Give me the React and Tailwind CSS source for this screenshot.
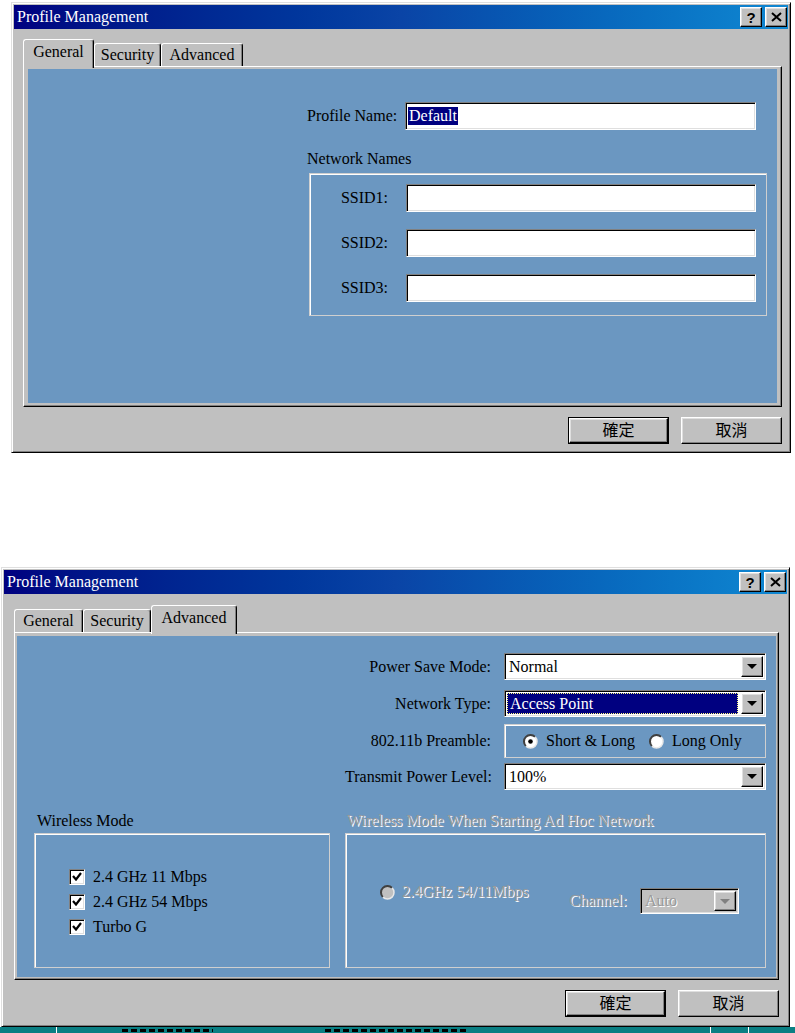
import React from 'react';

const RAISED = "border border-t-white border-l-white border-r-black border-b-black shadow-[inset_-1px_-1px_0_#808080,inset_1px_1px_0_#dfdfdf] bg-[#c0c0c0]";
const SUNKEN = "border border-t-[#808080] border-l-[#808080] border-r-white border-b-white shadow-[inset_1px_1px_0_#000000,inset_-1px_-1px_0_#dfdfdf]";
const ETCHED = "border border-[#cfcfcf] shadow-[inset_1px_1px_0_#ffffff]";
const DISABLED = "text-[#9a9a9a] [text-shadow:1px_1px_0_#ffffff]";

function TitleBar() {
  return (
    <div className="h-[24px] flex items-center justify-between bg-linear-to-r from-[#000080] via-[#0a44a6] to-[#1088d2] pl-[3px] pr-[1px]">
      <span className="text-white text-[16px] leading-none">Profile Management</span>
      <div className="flex gap-[3px]">
        <div className={`w-[22px] h-[20px] ${RAISED} flex items-center justify-center font-['Liberation_Sans',sans-serif] font-bold text-[15px] leading-none`}>?</div>
        <div className={`w-[22px] h-[20px] ${RAISED} flex items-center justify-center`}>
          <svg width="11" height="10" viewBox="0 0 11 10">
            <path d="M1 1 L10 9 M10 1 L1 9" stroke="#000" strokeWidth="2" />
          </svg>
        </div>
      </div>
    </div>
  );
}

function Window({ className, children }) {
  return (
    <div className={`flex flex-col bg-[#c0c0c0] border border-t-[#dfdfdf] border-l-[#dfdfdf] border-r-black border-b-black shadow-[inset_1px_1px_0_#ffffff,inset_-1px_-1px_0_#808080] p-[2px] ${className}`}>
      <TitleBar />
      {children}
    </div>
  );
}

function Tab({ label, active, w }) {
  return (
    <div
      className={`${w} flex items-center justify-center bg-[#c0c0c0] border-l border-t border-r border-l-white border-t-white border-r-black shadow-[inset_-1px_0_0_#808080] rounded-t-[3px] ${
        active ? 'h-[29px] -mb-[2px] relative z-10 pb-[4px]' : 'h-[23px]'
      }`}
    >
      {label}
    </div>
  );
}

function Field({ className, children }) {
  return (
    <div className={`bg-white ${SUNKEN} flex items-center p-[2px] ${className}`}>{children}</div>
  );
}

function DropBtn({ disabled }) {
  return (
    <div className={`w-[22px] h-full ${RAISED} flex items-center justify-center`}>
      <svg width="10" height="5" viewBox="0 0 10 5">
        <path d="M0 0 H10 L5 5 Z" fill={disabled ? '#808080' : '#000000'} />
      </svg>
    </div>
  );
}

function Select({ value, selected, disabled, className }) {
  return (
    <div className={`${disabled ? 'bg-[#c0c0c0]' : 'bg-white'} ${SUNKEN} flex items-stretch p-[2px] ${className}`}>
      <div className="flex-1 flex items-center pr-[3px]">
        {selected ? (
          <span className="flex-1 h-full flex items-center pl-[2px] bg-[#000080] text-white border border-dotted border-[#ffff80]">
            {value}
          </span>
        ) : (
          <span className={`pl-[2px] ${disabled ? DISABLED : ''}`}>{value}</span>
        )}
      </div>
      <DropBtn disabled={disabled} />
    </div>
  );
}

function Radio({ checked, disabled }) {
  return (
    <svg width="15" height="15" viewBox="0 0 15 15" className="shrink-0">
      <circle cx="7.5" cy="7.5" r="6.5" fill={disabled ? '#c0c0c0' : '#ffffff'} />
      <path d="M2.9 12.1 A6.5 6.5 0 0 1 12.1 2.9" stroke="#404040" strokeWidth="2" fill="none" />
      <path d="M12.1 2.9 A6.5 6.5 0 0 1 2.9 12.1" stroke="#e8e8e8" strokeWidth="1.5" fill="none" />
      {checked && <circle cx="7.5" cy="7.5" r="2.3" fill="#000000" />}
    </svg>
  );
}

function Check({ label }) {
  return (
    <div className="flex items-center h-[17px] gap-[8px]">
      <div className={`w-[16px] h-[16px] bg-white ${SUNKEN} flex items-center justify-center`}>
        <svg width="10" height="9" viewBox="0 0 10 9">
          <path d="M1 4 L4 7.5 L9 1" stroke="#000" strokeWidth="2.2" fill="none" />
        </svg>
      </div>
      <span>{label}</span>
    </div>
  );
}

function Buttons() {
  return (
    <div className="flex justify-end gap-[12px] mt-[10px]">
      <div className="border border-black">
        <div className={`w-[99px] h-[25px] ${RAISED} flex items-center justify-center`}>確定</div>
      </div>
      <div className={`w-[101px] h-[27px] ${RAISED} flex items-center justify-center`}>取消</div>
    </div>
  );
}

function SsidRow({ label }) {
  return (
    <div className="flex items-center">
      <span className="w-[78px] text-right">{label}</span>
      <Field className="ml-[18px] w-[350px] h-[28px]" />
    </div>
  );
}

function GeneralDialog() {
  return (
    <Window className="w-[780px] h-[451px]">
      <div className="pl-[9px] pr-[6px] pt-[10px] flex flex-col">
        <div className="flex items-end h-[27px]">
          <Tab label="General" active w="w-[71px]" />
          <Tab label="Security" w="w-[67px]" />
          <Tab label="Advanced" w="w-[82px]" />
        </div>
        <div className="h-[341px] flex flex-col border border-t-white border-l-white border-r-black border-b-black shadow-[inset_-1px_-1px_0_#808080] pl-[4px] pt-[2px] pr-[4px] pb-[3px]">
          <div className="flex-1 bg-[#6b97c1] pl-[279px] pt-[33px]">
            <div className="w-[460px] flex flex-col">
              <div className="flex items-center">
                <span className="w-[98px] whitespace-nowrap">Profile Name:</span>
                <Field className="w-[351px] h-[28px]">
                  <span className="bg-[#000080] text-white px-[1px] leading-[18px]">Default</span>
                </Field>
              </div>
              <div className="mt-[20px] leading-[18px]">Network Names</div>
              <div className={`mt-[5px] ml-[2px] w-[458px] h-[143px] ${ETCHED} pt-[10px] flex flex-col gap-[17px]`}>
                <SsidRow label="SSID1:" />
                <SsidRow label="SSID2:" />
                <SsidRow label="SSID3:" />
              </div>
            </div>
          </div>
        </div>
        <Buttons />
      </div>
    </Window>
  );
}

function Row({ label, children, className }) {
  return (
    <div className={`flex items-center ${className}`}>
      <span className="w-[146px] text-right whitespace-nowrap">{label}</span>
      <div className="ml-[13px] w-[262px]">{children}</div>
    </div>
  );
}

function AdvancedDialog() {
  return (
    <Window className="w-[789px] h-[460px]">
      <div className="pl-[10px] pr-[8px] pt-[11px] flex flex-col">
        <div className="flex items-end h-[27px]">
          <Tab label="General" w="w-[69px]" />
          <Tab label="Security" w="w-[68px]" />
          <Tab label="Advanced" active w="w-[86px]" />
        </div>
        <div className="h-[348px] flex flex-col border border-t-white border-l-white border-r-black border-b-black shadow-[inset_-1px_-1px_0_#808080] pl-[2px] pt-[3px] pr-[2px] pb-[2px]">
          <div className="flex-1 bg-[#6b97c1] flex flex-col">
            <div className="pl-[328px] pt-[17px] flex flex-col">
              <Row label="Power Save Mode:">
                <Select value="Normal" className="h-[27px]" />
              </Row>
              <Row label="Network Type:" className="mt-[10px]">
                <Select value="Access Point" selected className="h-[27px]" />
              </Row>
              <Row label="802.11b Preamble:" className="mt-[7px]">
                <div className={`h-[34px] ${ETCHED} flex items-center pl-[18px]`}>
                  <Radio checked />
                  <span className="ml-[8px]">Short &amp; Long</span>
                  <span className="ml-[14px]"><Radio /></span>
                  <span className="ml-[8px]">Long Only</span>
                </div>
              </Row>
              <Row label="Transmit Power Level:" className="mt-[5px]">
                <Select value="100%" className="h-[27px]" />
              </Row>
            </div>
            <div className="flex pl-[17px] gap-[15px] mt-[21px]">
              <div className="w-[296px] flex flex-col">
                <div className="h-[22px] pl-[3px] leading-[20px]">Wireless Mode</div>
                <div className={`h-[135px] ${ETCHED} pl-[34px] pt-[34px] flex flex-col gap-[8px]`}>
                  <Check label="2.4 GHz 11 Mbps" />
                  <Check label="2.4 GHz 54 Mbps" />
                  <Check label="Turbo G" />
                </div>
              </div>
              <div className="w-[421px] flex flex-col">
                <div className={`h-[22px] pl-[2px] leading-[20px] ${DISABLED}`}>Wireless Mode When Starting Ad Hoc Network</div>
                <div className={`h-[135px] ${ETCHED} flex items-start`}>
                  <div className="flex items-center ml-[34px] mt-[48px]">
                    <Radio disabled />
                    <span className={`ml-[7px] ${DISABLED}`}>2.4GHz 54/11Mbps</span>
                  </div>
                  <div className="flex items-center ml-auto mr-[26px] mt-[54px]">
                    <span className={DISABLED}>Channel:</span>
                    <Select value="Auto" disabled className="ml-[13px] w-[99px] h-[26px]" />
                  </div>
                </div>
              </div>
            </div>
          </div>
        </div>
        <Buttons />
      </div>
    </Window>
  );
}

export default function App() {
  return (
    <div className="w-[795px] h-[1033px] bg-white overflow-hidden font-['Liberation_Serif','Noto_Sans_CJK_TC',serif] text-[16px] leading-tight text-black">
      <div className="pt-[2px] pl-[11px]">
        <GeneralDialog />
      </div>
      <div className="mt-[114px] pl-[1px]">
        <AdvancedDialog />
      </div>
      <div className="h-[6px] bg-[#0b7f83] flex items-start">
        <div className="w-[56px]" />
        <div className="w-px h-full bg-white" />
        <div className="w-[65px]" />
        <div className="w-[91px] h-[3px] mt-[2px] bg-[repeating-linear-gradient(90deg,#000_0_6px,transparent_6px_9px)]" />
        <div className="w-[112px]" />
        <div className="w-[142px] h-[3px] mt-[2px] bg-[repeating-linear-gradient(90deg,#000_0_6px,transparent_6px_9px)]" />
        <div className="w-[243px]" />
        <div className="w-px h-full bg-white" />
        <div className="w-[37px]" />
        <div className="w-px h-full bg-white" />
      </div>
    </div>
  );
}
